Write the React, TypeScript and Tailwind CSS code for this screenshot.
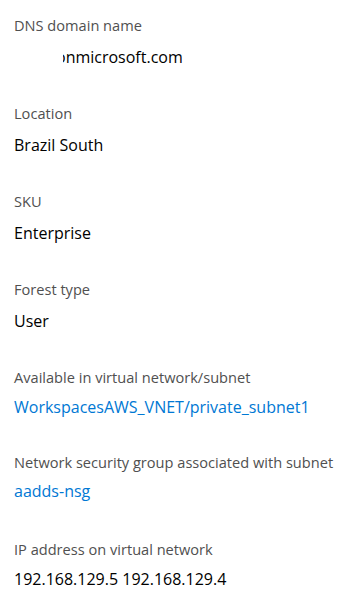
type Item = {
  label: string;
  value: string;
  link?: boolean;
  mt: string;
  gap: string;
};

const items: Item[] = [
  { label: "DNS domain name", value: "onmicrosoft.com", mt: "mt-0", gap: "gap-[10px]" },
  { label: "Location", value: "Brazil South", mt: "mt-[34px]", gap: "gap-[10px]" },
  { label: "SKU", value: "Enterprise", mt: "mt-[34px]", gap: "gap-[10px]" },
  { label: "Forest type", value: "User", mt: "mt-[34px]", gap: "gap-[10px]" },
  {
    label: "Available in virtual network/subnet",
    value: "WorkspacesAWS_VNET/private_subnet1",
    link: true,
    mt: "mt-[34px]",
    gap: "gap-[8px]",
  },
  {
    label: "Network security group associated with subnet",
    value: "aadds-nsg",
    link: true,
    mt: "mt-[33px]",
    gap: "gap-[7px]",
  },
  { label: "IP address on virtual network", value: "192.168.129.5 192.168.129.4", mt: "mt-[36px]", gap: "gap-[8px]" },
];

export default function App() {
  return (
    <div className="w-[360px] h-[614px] bg-white px-[14px] pt-[15px] font-['Open_Sans',sans-serif] overflow-hidden">
      {items.map((it, i) => (
        <div key={it.label} className={`flex flex-col ${it.mt} ${it.gap}`}>
          <div className="text-[14.6px] leading-[20px] text-[#505050] whitespace-nowrap">{it.label}</div>
          <div
            className={`text-[16px] leading-[24px] whitespace-nowrap ${
              it.link ? "text-[#0078d4]" : "text-[#000000]"
            }`}
          >
            {i === 0 ? (
              // domain prefix is blanked out in the original
              <span className="relative inline-block pl-[42px]">
                {it.value}
                <span className="absolute left-0 top-0 bottom-0 w-[49px] bg-white" />
              </span>
            ) : (
              it.value
            )}
          </div>
        </div>
      ))}
    </div>
  );
}
